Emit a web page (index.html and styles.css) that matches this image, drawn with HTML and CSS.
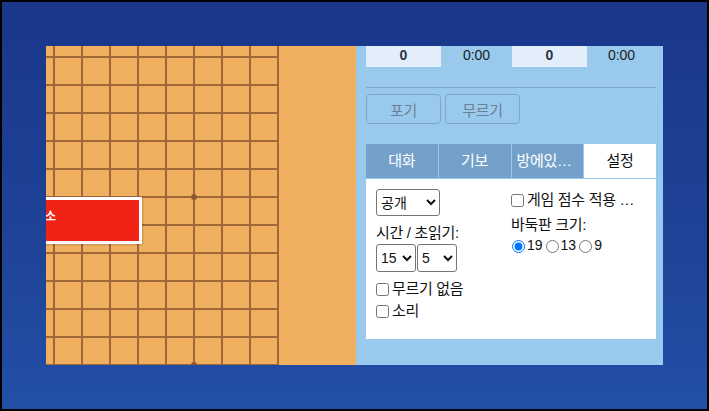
FILE: index.html
```html
<!DOCTYPE html>
<html lang="ko">
<head>
<meta charset="utf-8">
<title>바둑</title>
<link rel="stylesheet" href="styles.css">
</head>
<body>
<div class="screen">
  <div class="app">
    <div class="board">
      <svg width="310" height="319" viewBox="0 0 310 319" xmlns="http://www.w3.org/2000/svg">
        <rect width="310" height="319" fill="#f0b060"/>
        <g stroke="#a0673b" stroke-width="2">
          <line x1="8" y1="0" x2="8" y2="319"/>
          <line x1="36" y1="0" x2="36" y2="319"/>
          <line x1="64" y1="0" x2="64" y2="319"/>
          <line x1="92" y1="0" x2="92" y2="319"/>
          <line x1="120" y1="0" x2="120" y2="319"/>
          <line x1="148" y1="0" x2="148" y2="319"/>
          <line x1="176" y1="0" x2="176" y2="319"/>
          <line x1="204" y1="0" x2="204" y2="319"/>
          <line x1="232" y1="0" x2="232" y2="319"/>
          <line x1="0" y1="11" x2="233" y2="11"/>
          <line x1="0" y1="39" x2="233" y2="39"/>
          <line x1="0" y1="67" x2="233" y2="67"/>
          <line x1="0" y1="95" x2="233" y2="95"/>
          <line x1="0" y1="123" x2="233" y2="123"/>
          <line x1="0" y1="151" x2="233" y2="151"/>
          <line x1="0" y1="179" x2="233" y2="179"/>
          <line x1="0" y1="207" x2="233" y2="207"/>
          <line x1="0" y1="235" x2="233" y2="235"/>
          <line x1="0" y1="263" x2="233" y2="263"/>
          <line x1="0" y1="291" x2="233" y2="291"/>
          <line x1="0" y1="319" x2="233" y2="319"/>
        </g>
        <g fill="#8c5630">
          <rect x="145.5" y="148.5" width="5" height="5"/>
          <rect x="145.5" y="316.5" width="5" height="5"/>
        </g>
      </svg>
      <div class="cancel">취소</div>
    </div>
    <div class="panel">
      <div class="scores">
        <div class="cell score">0</div>
        <div class="cell time">0:00</div>
        <div class="cell score">0</div>
        <div class="cell time">0:00</div>
      </div>
      <hr class="sep">
      <div class="actions">
        <button class="btn" disabled>포기</button>
        <button class="btn" disabled>무르기</button>
      </div>
      <div class="tabs">
        <div class="tab">대화</div>
        <div class="tab">기보</div>
        <div class="tab">방에있는 사람</div>
        <div class="tab active">설정</div>
      </div>
      <div class="settings">
        <div class="col">
          <select class="sel sel-access"><option>공개</option><option>비공개</option></select>
          <div class="label">시간 / 초읽기:</div>
          <div class="time-sel">
            <select class="sel sel-time"><option>15</option></select><select class="sel sel-time"><option>5</option></select>
          </div>
          <label class="check first"><input type="checkbox">무르기 없음</label>
          <label class="check"><input type="checkbox">소리</label>
        </div>
        <div class="col">
          <label class="check ellip"><input type="checkbox"><span class="ellip-text">게임 점수 적용 여부</span></label>
          <div class="label label-size">바둑판 크기:</div>
          <div class="radios">
            <input class="radio" type="radio" name="size" checked>19<input class="radio" type="radio" name="size">13<input class="radio" type="radio" name="size">9
          </div>
        </div>
      </div>
    </div>
  </div>
</div>
</body>
</html>
```
FILE: styles.css
```css
html, body {
  margin: 0;
  padding: 0;
}

body {
  font-family: "Liberation Sans", "Noto Sans CJK KR", sans-serif;
  font-size: 15px;
  letter-spacing: -0.3px;
}

.screen {
  width: 709px;
  height: 411px;
  box-sizing: border-box;
  border: 2px solid #000;
  background: linear-gradient(180deg, #1a378a 0%, #1e4296 55%, #234fa6 100%);
  padding: 44px 0 0 44px;
  overflow: hidden;
}

.app {
  display: flex;
  height: 319px;
}

.board {
  position: relative;
  width: 310px;
  height: 319px;
  overflow: hidden;
  background: #f0b060;
}

.board svg {
  display: block;
}

.cancel {
  position: absolute;
  left: -60px;
  top: 151px;
  width: 156px;
  height: 47px;
  box-sizing: border-box;
  border: 3px solid #fff;
  background: #f02314;
  color: #fff;
  font-weight: bold;
  font-size: 12px;
  line-height: 35px;
  padding-left: 45px;
  letter-spacing: 0;
  box-shadow: 1px 1px 2px rgba(0, 0, 0, 0.2);
}

.panel {
  width: 307px;
  box-sizing: border-box;
  background: #99caee;
  padding: 0 7px 0 10px;
}

.scores {
  display: grid;
  grid-template-columns: 75px 71px 75px 69px;
  height: 21px;
  font-size: 14px;
  line-height: 16px;
  letter-spacing: 0;
  color: #1c1c1c;
}

.cell {
  text-align: center;
  padding-top: 1px;
}

.score {
  background: #e2effb;
  font-weight: bold;
  color: #2b3440;
}

.sep {
  margin: 20px 0 0;
  border: 0;
  height: 1px;
  background: #7fa7cb;
}

.actions {
  display: flex;
  gap: 4px;
  margin-top: 6px;
}

.btn {
  width: 75px;
  height: 30px;
  padding: 0;
  border: 1px solid #7ea6c8;
  border-radius: 4px;
  background: transparent;
  color: #6d8194;
  font-family: inherit;
  font-size: 15px;
  letter-spacing: -0.3px;
}

.tabs {
  display: flex;
  gap: 1px;
  margin-top: 20px;
  height: 34px;
}

.tab {
  flex: 1;
  min-width: 0;
  padding: 0 5px;
  background: #73a1ca;
  color: #fff;
  text-align: center;
  line-height: 34px;
  white-space: nowrap;
  overflow: hidden;
  text-overflow: ellipsis;
}

.tab.active {
  background: #fff;
  color: #111;
}

.settings {
  margin-top: 1px;
  height: 160px;
  box-sizing: border-box;
  background: #fff;
  padding: 10px 10px 0;
  display: grid;
  grid-template-columns: 135px 1fr;
  color: #111;
}

.col {
  display: flex;
  flex-direction: column;
  align-items: flex-start;
  min-width: 0;
}

.sel {
  font-family: inherit;
  font-size: 14px;
  letter-spacing: 0;
  color: #111;
  background: #fff;
  border: 1px solid #767676;
  border-radius: 3px;
  margin: 0;
}

.sel-access {
  width: 64px;
  height: 27px;
}

.label {
  margin-top: 8px;
  line-height: 18px;
}

.time-sel {
  display: flex;
  gap: 1px;
  margin-top: 2px;
}

.sel-time {
  width: 40px;
  height: 28px;
}

.check {
  display: block;
  line-height: 22px;
  white-space: nowrap;
}

.check.first {
  margin-top: 6px;
}

.check input {
  width: 13px;
  height: 13px;
  margin: 0 3px 0 0;
  vertical-align: -2px;
}

.ellip {
  display: flex;
  align-items: center;
  width: 135px;
}

.ellip input {
  flex: none;
}

.ellip-text {
  min-width: 0;
  overflow: hidden;
  text-overflow: ellipsis;
  white-space: nowrap;
}

.label-size {
  margin-top: 5px;
}

.radios {
  margin-top: 2px;
  font-size: 14px;
  line-height: 18px;
  letter-spacing: 0;
  white-space: nowrap;
}

.radio {
  width: 13px;
  height: 13px;
  margin: 0 2px 0 3px;
  vertical-align: -3px;
}

.radio:first-child {
  margin-left: 1px;
}
```
